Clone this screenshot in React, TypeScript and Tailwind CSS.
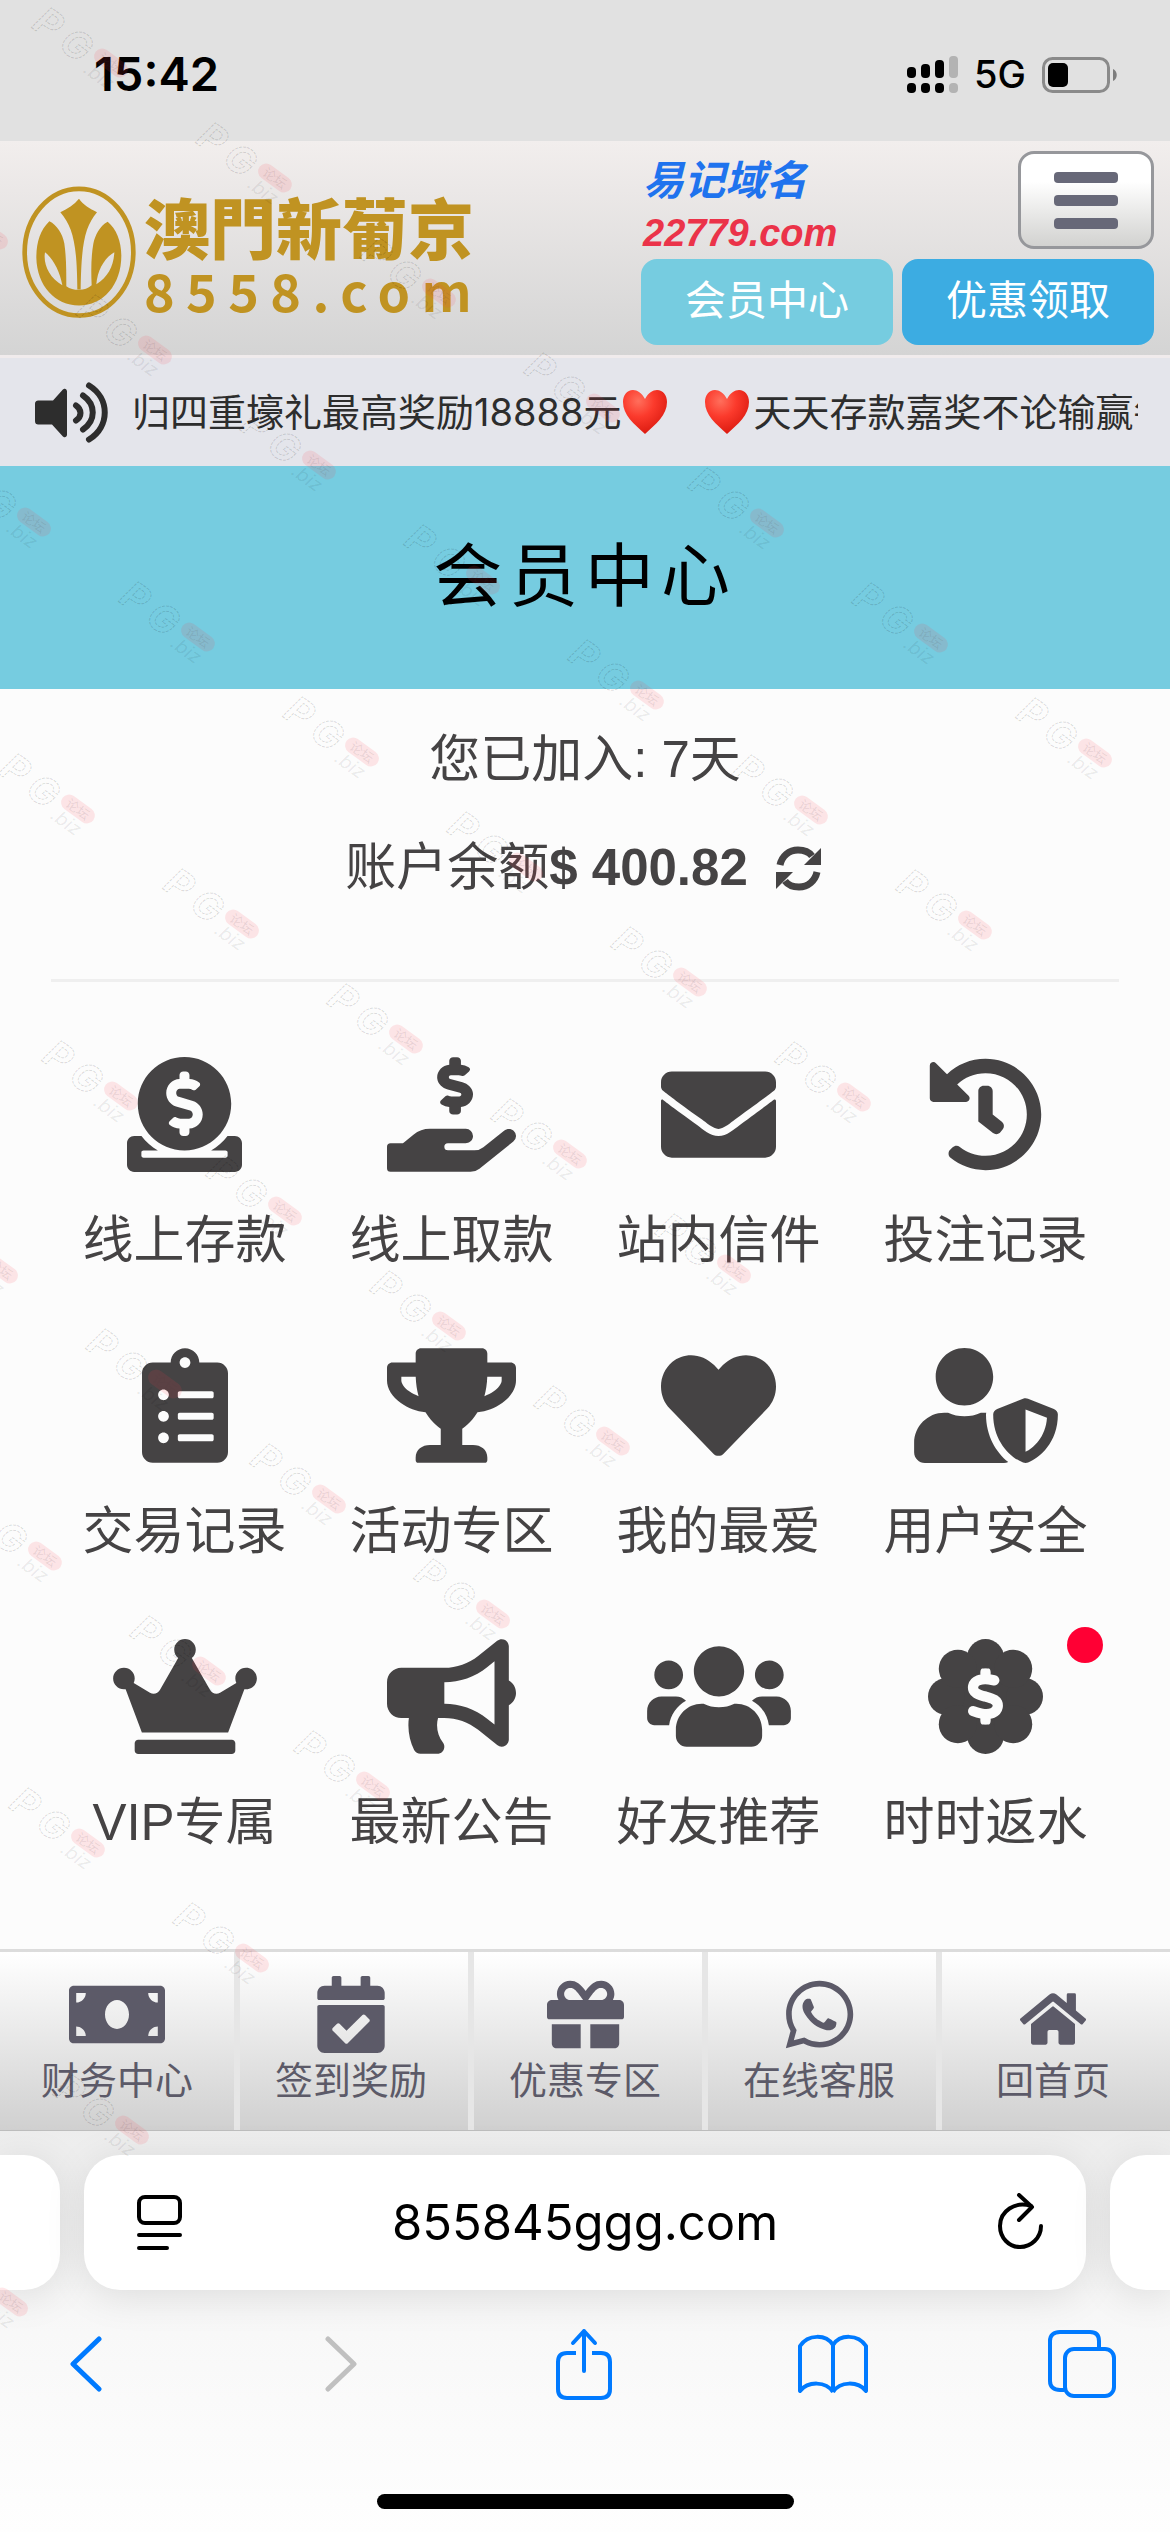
import type { ReactNode } from "react";
import type { IconType } from "react-icons";
import {
  FaBullhorn,
  FaCalendarCheck,
  FaClipboardList,
  FaCrown,
  FaDonate,
  FaEnvelope,
  FaGift,
  FaHandHoldingUsd,
  FaHeart,
  FaHistory,
  FaHome,
  FaMoneyBill,
  FaTrophy,
  FaUserShield,
  FaUsers,
  FaWhatsapp,
} from "react-icons/fa";
import { FaDollarSign } from "react-icons/fa6";

type IconProps = { className?: string };

function BadgeDollar({ className }: IconProps) {
  return (
    <svg viewBox="0 0 512 512" fill="currentColor" className={className} aria-hidden="true">
      <circle cx="256" cy="256" r="190" />
      <circle cx="256" cy="82" r="82" />
      <circle cx="256" cy="430" r="82" />
      <circle cx="82" cy="256" r="82" />
      <circle cx="430" cy="256" r="82" />
      <circle cx="133" cy="133" r="85" />
      <circle cx="379" cy="133" r="85" />
      <circle cx="133" cy="379" r="85" />
      <circle cx="379" cy="379" r="85" />
      <FaDollarSign x="131" y="131" size={250} color="#fcfcfc" stroke="#fcfcfc" strokeWidth="30" />
    </svg>
  );
}

function Refresh({ className }: IconProps) {
  return (
    <svg viewBox="0 0 45 45" fill="none" className={className} aria-hidden="true">
      <path d="M4 19C6 10 13 4 22 4c6 0 11 2 14 6" stroke="currentColor" strokeWidth="7" />
      <path d="M45 2v17H28z" fill="currentColor" />
      <path d="M41 26c-2 9-9 15-18 15-6 0-11-2-14-6" stroke="currentColor" strokeWidth="7" />
      <path d="M0 43V26h17z" fill="currentColor" />
    </svg>
  );
}

function Speaker({ className }: IconProps) {
  return (
    <svg viewBox="0 0 73 60" fill="none" className={className} aria-hidden="true">
      <path
        d="M4 18h14L27 8c2-3 5-2 5 1v43c0 3-3 4-5 1L17 42H4c-3 0-4-1-4-4V22c0-3 1-4 4-4z"
        fill="currentColor"
      />
      <path
        d="M41 23c6 4 6 11 0 15M48 13c13 9 13 25 0 34M54 3c21 13 21 41 0 54"
        stroke="currentColor"
        strokeWidth="6"
        strokeLinecap="round"
      />
    </svg>
  );
}

function Heart() {
  return (
    <svg viewBox="0 0 46 46" className="h-[46px] w-[46px] shrink-0" aria-hidden="true">
      <defs>
        <radialGradient id="heart-fill" cx="0.35" cy="0.25" r="0.8">
          <stop offset="0" stopColor="#ff6f5c" />
          <stop offset="0.45" stopColor="#fb3a2c" />
          <stop offset="1" stopColor="#d9180e" />
        </radialGradient>
      </defs>
      <path
        d="M23 10C20 4 15 1 11 1 5 1 1 6 1 13c0 13 11 22 22 32 11-10 22-19 22-32 0-7-4-12-10-12-4 0-9 3-12 9z"
        fill="url(#heart-fill)"
      />
    </svg>
  );
}

function Emblem() {
  return (
    <svg viewBox="66 80 342 398" className="h-[133px] w-[114px] shrink-0" fill="#c09322" aria-hidden="true">
      <ellipse cx="237" cy="278" rx="163" ry="190" fill="none" stroke="#c09322" strokeWidth="14" />
      <path d="M237 118C222 136 203 148 181 158c38 44 50 96 51 232h10c2-136 12-188 49-232-22-10-41-22-54-40z" />
      <path
        fillRule="evenodd"
        d="M148 185c-28 27-39 64-39 110 2 84 56 143 128 143s127-61 127-150c0-42-15-80-41-101-24 13-38 41-43 66-7 39-7 83-5 124-11 9-22 14-38 14s-27-3-38-11c0-43 0-87-6-128-5-29-22-56-45-67zM135 278c-6 37 13 76 52 99-7-39-26-78-52-99zM343 278c-30 18-50 53-54 96 35-21 52-55 54-96z"
      />
    </svg>
  );
}

function Signal() {
  return (
    <svg viewBox="0 0 51 38" className="h-[38px] w-[51px]" aria-hidden="true">
      <rect x="0" y="11" width="9" height="11" rx="4" />
      <rect x="14" y="8" width="9" height="14" rx="4" />
      <rect x="28" y="4" width="9" height="18" rx="4" />
      <rect x="42" y="0" width="9" height="22" rx="4" fill="#b3b3b3" />
      <rect x="0" y="27" width="9" height="10" rx="4" />
      <rect x="14" y="27" width="9" height="10" rx="4" />
      <rect x="28" y="27" width="9" height="10" rx="4" />
      <rect x="42" y="27" width="9" height="10" rx="4" fill="#b3b3b3" />
    </svg>
  );
}

function Battery() {
  return (
    <svg viewBox="0 0 76 36" className="h-9 w-[76px]" aria-hidden="true">
      <rect x="1.5" y="1.5" width="65" height="33" rx="9" fill="none" stroke="#8a8a8a" strokeWidth="3" />
      <rect x="6" y="6" width="20" height="24" rx="5" />
      <path d="M71 12c5 2 5 10 0 12z" fill="#7d7d7d" />
    </svg>
  );
}

// marks sit on diagonals: each row starts at its lower right mark and runs up-left
const WATERMARKS = Array.from({ length: 10 }, (_, row) =>
  Array.from({ length: 7 }, (_, step) => ({
    x: Math.round(1095 - row * 120.4 - step * 164),
    y: Math.round(753 + row * 172.1 - step * 115),
  })),
)
  .flat()
  .filter((mark) => mark.x > -12);

function Watermark() {
  return (
    <svg className="pointer-events-none absolute inset-0 h-full w-full overflow-hidden" aria-hidden="true">
      {WATERMARKS.map(({ x, y }) => (
        <g key={`${x}-${y}`} transform={`translate(${x} ${y}) rotate(36)`}>
          <g
            fill="none"
            stroke="#000000"
            strokeOpacity="0.15"
            strokeDasharray="3 1"
            fontFamily="Inter, sans-serif"
            fontStyle="italic"
            fontWeight="700"
            fontSize="38"
          >
            <text x="-86" y="18">P</text>
            <text x="-53" y="19">G</text>
          </g>
          <rect x="-19" y="-8" width="38" height="16" rx="8" fill="#ff3c46" fillOpacity="0.12" />
          <text
            x="0"
            y="5"
            textAnchor="middle"
            fontFamily="Noto Sans CJK SC, sans-serif"
            fontSize="13"
            fill="#503c3c"
            fillOpacity="0.12"
          >
            论坛
          </text>
          <text
            x="-18"
            y="24"
            fontFamily="Inter, sans-serif"
            fontStyle="italic"
            fontSize="19"
            fill="#000000"
            fillOpacity="0.08"
          >
            .biz
          </text>
        </g>
      ))}
    </svg>
  );
}

type MenuEntry = { label: string; icon: IconType | typeof BadgeDollar; size?: string; dot?: boolean };

const MENU: MenuEntry[] = [
  { label: "线上存款", icon: FaDonate },
  { label: "线上取款", icon: FaHandHoldingUsd, size: "w-[129px]" },
  { label: "站内信件", icon: FaEnvelope },
  { label: "投注记录", icon: FaHistory },
  { label: "交易记录", icon: FaClipboardList, size: "w-[86px]" },
  { label: "活动专区", icon: FaTrophy, size: "w-[129px]" },
  { label: "我的最爱", icon: FaHeart },
  { label: "用户安全", icon: FaUserShield, size: "w-36" },
  { label: "VIP专属", icon: FaCrown, size: "w-36" },
  { label: "最新公告", icon: FaBullhorn, size: "w-[129px]" },
  { label: "好友推荐", icon: FaUsers, size: "w-36" },
  { label: "时时返水", icon: BadgeDollar, dot: true },
];

const NAV: { label: string; icon: IconType; size: string }[] = [
  { label: "财务中心", icon: FaMoneyBill, size: "h-[77px] w-24" },
  { label: "签到奖励", icon: FaCalendarCheck, size: "h-[77px] w-[68px]" },
  { label: "优惠专区", icon: FaGift, size: "h-[77px] w-[77px]" },
  { label: "在线客服", icon: FaWhatsapp, size: "h-[77px] w-[77px]" },
  { label: "回首页", icon: FaHome, size: "mt-2 h-[66px] w-[66px]" },
];

function ToolButton({ label, children }: { label: string; children: ReactNode }) {
  return (
    <button type="button" aria-label={label} className="flex h-[72px] w-24 items-center justify-center">
      {children}
    </button>
  );
}

export default function App() {
  return (
    <div className='relative min-h-screen overflow-hidden bg-[#fcfcfc] font-["Liberation_Sans","Noto_Sans_CJK_SC",sans-serif] text-[#454344]'>
      <div className="flex h-[141px] items-center justify-between bg-[#e1e1e1] pt-2 pr-[52px] pl-[94px] font-['Inter',sans-serif] text-black">
        <span className="text-[47px] font-semibold">15:42</span>
        <div className="flex items-center gap-4">
          <Signal />
          <span className="text-[38px] font-medium">5G</span>
          <Battery />
        </div>
      </div>

      <header className="flex justify-between border-b-3 border-[#f0ebec] bg-linear-to-b from-[#f2eeed] to-[#d4d4d4] py-[10px] pr-4 pl-[22px]">
        <a href="#home" className="flex items-center gap-2 pt-2 text-[#c09322]">
          <Emblem />
          <span className="flex flex-col">
            <span className="font-['Noto_Sans_CJK_TC',sans-serif] text-[66px] leading-[76px] font-black">澳門新葡京</span>
            <span className="font-['Noto_Sans_CJK_SC',sans-serif] text-[52px] leading-[54px] font-bold tracking-[0.22em]">
              8558.com
            </span>
          </span>
        </a>
        <div className="flex w-[513px] flex-col gap-[10px]">
          <div className="flex h-[98px] justify-between">
            <div className="flex flex-col pt-1 pl-0.5 font-bold italic">
              <span className="text-[41px] leading-[52px] text-[#1f73ee]">易记域名</span>
              <span className="text-[38px] leading-[52px] text-[#eb3349]">22779.com</span>
            </div>
            <button
              type="button"
              aria-label="菜单"
              className="flex h-[98px] w-[136px] flex-col items-center justify-center gap-3 rounded-2xl border-3 border-[#96979b] bg-linear-to-b from-white from-30% to-[#d2d2d0]"
            >
              <span className="h-[11px] w-16 rounded-sm bg-[#676878]" />
              <span className="h-[11px] w-16 rounded-sm bg-[#676878]" />
              <span className="h-[11px] w-16 rounded-sm bg-[#676878]" />
            </button>
          </div>
          <div className="grid grid-cols-2 gap-[9px] text-[41px] text-white">
            <button type="button" className="h-[86px] rounded-2xl bg-[#76cce0]">会员中心</button>
            <button type="button" className="h-[86px] rounded-2xl bg-[#3cace2]">优惠领取</button>
          </div>
        </div>
      </header>

      <div className="flex h-[108px] items-center bg-[#e4e5eb] pr-8 pl-[35px] text-[#2d2d2d]">
        <Speaker className="h-[69px] w-[73px] shrink-0" />
        <div className="ml-6 flex min-w-0 flex-1 items-center overflow-hidden font-['Inter','Noto_Sans_CJK_SC',sans-serif] text-[38px] whitespace-nowrap">
          <span>归四重壕礼最高奖励18888元</span>
          <Heart />
          <span className="w-9 shrink-0" />
          <Heart />
          <span className="ml-1">天天存款嘉奖不论输赢每日</span>
        </div>
      </div>

      <h1 className="flex h-[223px] items-center justify-center bg-[#76cce0] text-[69px] tracking-widest text-black">
        会员中心
      </h1>

      <main className="px-[51px]">
        <div className="flex flex-col items-center gap-[30px] border-b-3 border-[#efefef] pt-8 pb-[72px] text-[51px] leading-[78px]">
          <p>您已加入: 7天</p>
          <div className="flex items-center">
            账户余额<strong>$ 400.82</strong>
            <button type="button" aria-label="刷新余额" className="mr-1 ml-7">
              <Refresh className="h-[45px] w-[45px]" />
            </button>
          </div>
        </div>

        <div className="grid grid-cols-4 gap-y-[70px] pt-[75px] pb-[89px]">
          {MENU.map(({ label, icon: Icon, size = "w-[115px]", dot }) => (
            <a href={`#${label}`} key={label} className="relative flex flex-col items-center">
              <Icon className={`h-[115px] ${size}`} />
              <span className="mt-8 text-[51px] leading-[74px]">{label}</span>
              {dot ? <span className="absolute -top-3 right-4 h-9 w-9 rounded-full bg-[#ff0034]" /> : null}
            </a>
          ))}
        </div>
      </main>

      <nav className="grid h-[182px] grid-cols-5 border-t-3 border-b border-t-[#dcdcdc] border-b-[#bdbdbd] bg-linear-to-b from-white to-[#d0d0d0] text-[#5c5a68]">
        {NAV.map(({ label, icon: Icon, size }) => (
          <a
            href={`#${label}`}
            key={label}
            className="flex flex-col items-center border-l-6 border-[#e6e6e6] pt-6 pr-[6px] first:border-transparent"
          >
            <span className="flex h-[77px] items-center">
              <Icon className={size} />
            </span>
            <span className="text-[38px] leading-[56px]">{label}</span>
          </a>
        ))}
      </nav>

      <footer className="bg-linear-to-b from-[#ededed] via-[#f8f8f8] via-50% to-[#fefefe] text-black">
        <div className="flex h-[159px] gap-6 pt-6">
          <div className="w-[60px] rounded-r-[36px] bg-white shadow-[0_6px_40px_rgba(0,0,0,0.1)]" />
          <div className="flex flex-1 items-center justify-between rounded-[36px] bg-white pr-10 pl-[50px] shadow-[0_6px_40px_rgba(0,0,0,0.1)]">
            <button type="button" aria-label="页面选项">
              <svg viewBox="0 0 50 56" className="h-14 w-[50px]" fill="none" stroke="currentColor" strokeWidth="4" strokeLinecap="round">
                <rect x="5" y="2" width="41" height="26" rx="6" />
                <path d="M5 40h41M5 53h28" />
              </svg>
            </button>
            <span className="font-['Inter',sans-serif] text-[49px]">855845ggg.com</span>
            <button type="button" aria-label="重新加载" className="pl-[10px]">
              <svg viewBox="0 0 50 56" className="mb-1 h-14 w-[50px]" fill="none" stroke="currentColor" strokeWidth="4" strokeLinecap="round" strokeLinejoin="round">
                <path d="M35 13C19 8 4 18 4 33c0 12 9 21 20 21s21-9 21-21" />
                <path d="M23 2l13 12-13 13" />
              </svg>
            </button>
          </div>
          <div className="w-[60px] rounded-l-[36px] bg-white shadow-[0_6px_40px_rgba(0,0,0,0.1)]" />
        </div>

        <div className="flex h-[204px] items-start justify-between pt-[38px] pr-10 pl-[38px] text-[#007aff]">
          <ToolButton label="后退">
            <svg viewBox="0 0 34 56" className="h-14 w-[34px]" fill="none" stroke="currentColor" strokeWidth="5" strokeLinecap="round" strokeLinejoin="round">
              <path d="M30 3L4 28l26 25" />
            </svg>
          </ToolButton>
          <ToolButton label="前进">
            <svg viewBox="0 0 34 56" className="ml-3 h-14 w-[34px] text-[#c0c0c0]" fill="none" stroke="currentColor" strokeWidth="5" strokeLinecap="round" strokeLinejoin="round">
              <path d="M4 3l26 25L4 53" />
            </svg>
          </ToolButton>
          <ToolButton label="分享">
            <svg viewBox="0 0 58 72" className="h-[72px] w-[58px]" fill="none" stroke="currentColor" strokeWidth="4" strokeLinecap="round" strokeLinejoin="round">
              <path d="M29 43V3M18 15L29 3l11 12" />
              <path d="M21 25h-9c-6 0-9 3-9 9v27c0 6 3 9 9 9h34c6 0 9-3 9-9V34c0-6-3-9-9-9h-9" strokeLinecap="butt" />
            </svg>
          </ToolButton>
          <ToolButton label="书签">
            <svg viewBox="0 0 72 62" className="h-[62px] w-[72px]" fill="none" stroke="currentColor" strokeWidth="4" strokeLinejoin="round">
              <path d="M36 59C29 48 11 48 3 58V13C11 1 29 1 36 12M36 59c7-11 25-11 33-1V13C61 1 43 1 36 12M36 12v47" />
            </svg>
          </ToolButton>
          <ToolButton label="标签页">
            <svg viewBox="0 0 68 68" className="h-[68px] w-[68px]" fill="none" stroke="currentColor" strokeWidth="4">
              <rect x="17" y="19" width="49" height="47" rx="9" />
              <path d="M16 60h-4c-6 0-10-3-10-9V11c0-6 4-9 10-9h30c6 0 9 3 9 9v8" />
            </svg>
          </ToolButton>
        </div>
        <div className="flex h-[39px] items-start justify-center">
          <span className="h-[15px] w-[417px] rounded-full bg-black" />
        </div>
      </footer>

      <Watermark />
    </div>
  );
}
